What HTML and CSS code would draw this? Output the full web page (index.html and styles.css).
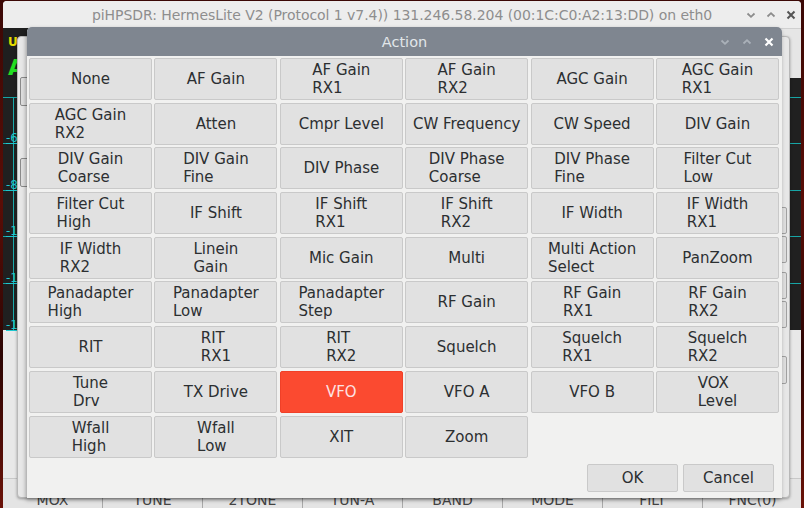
FILE: index.html
```html
<!DOCTYPE html>
<html>
<head>
<meta charset="utf-8">
<link rel="stylesheet" href="styles.css">
</head>
<body>
<div class="desktop">
  <div class="mainwin">
    <div class="main-title">
      <span class="main-title-text">piHPSDR: HermesLite V2 (Protocol 1 v7.4)) 131.246.58.204 (00:1C:C0:A2:13:DD) on eth0</span>
      <div class="wctl main-ctl">
        <svg width="10" height="8" viewBox="0 0 10 8"><path d="M1.5 2.5 L5 5.8 L8.5 2.5" fill="none" stroke="#8c8c8c" stroke-width="1.8"/></svg>
        <svg width="10" height="8" viewBox="0 0 10 8"><path d="M1.5 5.5 L5 2.2 L8.5 5.5" fill="none" stroke="#8c8c8c" stroke-width="1.8"/></svg>
        <svg width="10" height="10" viewBox="0 0 10 10"><path d="M1.5 1.5 L8.5 8.5 M8.5 1.5 L1.5 8.5" fill="none" stroke="#555" stroke-width="2"/></svg>
      </div>
    </div>
    <div class="main-body">
      <div class="top-area">
        <div class="vfo-panel">
          <div class="vfo-mode">USB</div>
          <div class="vfo-freq">A</div>
          <div class="vfo-lock">Lock</div>
        </div>
        <div class="meter-panel"></div>
      </div>
      <div class="panadapter">
        <div class="pan-vline"></div>
        <div class="pan-row first"><span></span></div>
        <div class="pan-row"><span>-60</span></div>
        <div class="pan-row"><span>-80</span></div>
        <div class="pan-row"><span>-100</span></div>
        <div class="pan-row"><span>-120</span></div>
        <div class="pan-row last"><span>-140</span></div>
      </div>
      <div class="waterfall"></div>
      <div class="toolbar">
        <div class="tb">MOX</div><div class="tb">TUNE</div><div class="tb">2TONE</div><div class="tb">TUN-A</div>
        <div class="tb">BAND</div><div class="tb">MODE</div><div class="tb">FILT</div><div class="tb">FNC(0)</div>
      </div>
    </div>
  </div>

  <div class="parentdlg">
    <div class="pd-left">
      <div class="pd-btn b1"></div>
      <div class="pd-btn b2"></div>
    </div>
    <div class="pd-right">
      <div class="pd-btn r1"></div>
      <div class="pd-btn r2"></div>
      <div class="pd-btn r3"></div>
      <div class="pd-btn r4"></div>
      <div class="pd-btn r5"></div>
    </div>
  </div>

  <div class="dialog">
    <div class="dlg-title">
      <span class="dlg-title-text">Action</span>
      <div class="wctl dlg-ctl">
        <svg width="10" height="8" viewBox="0 0 10 8"><path d="M1.5 2.5 L5 5.8 L8.5 2.5" fill="none" stroke="#aab1b9" stroke-width="1.8"/></svg>
        <svg width="10" height="8" viewBox="0 0 10 8"><path d="M1.5 5.5 L5 2.2 L8.5 5.5" fill="none" stroke="#aab1b9" stroke-width="1.8"/></svg>
        <svg width="10" height="10" viewBox="0 0 10 10"><path d="M1.5 1.5 L8.5 8.5 M8.5 1.5 L1.5 8.5" fill="none" stroke="#ffffff" stroke-width="2.2"/></svg>
      </div>
    </div>
    <div class="dlg-body">
      <div class="grid">
        <button class="act"><span>None</span></button>
        <button class="act"><span>AF Gain</span></button>
        <button class="act"><span>AF Gain<br>RX1</span></button>
        <button class="act"><span>AF Gain<br>RX2</span></button>
        <button class="act"><span>AGC Gain</span></button>
        <button class="act"><span>AGC Gain<br>RX1</span></button>

        <button class="act"><span>AGC Gain<br>RX2</span></button>
        <button class="act"><span>Atten</span></button>
        <button class="act"><span>Cmpr Level</span></button>
        <button class="act"><span>CW Frequency</span></button>
        <button class="act"><span>CW Speed</span></button>
        <button class="act"><span>DIV Gain</span></button>

        <button class="act"><span>DIV Gain<br>Coarse</span></button>
        <button class="act"><span>DIV Gain<br>Fine</span></button>
        <button class="act"><span>DIV Phase</span></button>
        <button class="act"><span>DIV Phase<br>Coarse</span></button>
        <button class="act"><span>DIV Phase<br>Fine</span></button>
        <button class="act"><span>Filter Cut<br>Low</span></button>

        <button class="act"><span>Filter Cut<br>High</span></button>
        <button class="act"><span>IF Shift</span></button>
        <button class="act"><span>IF Shift<br>RX1</span></button>
        <button class="act"><span>IF Shift<br>RX2</span></button>
        <button class="act"><span>IF Width</span></button>
        <button class="act"><span>IF Width<br>RX1</span></button>

        <button class="act"><span>IF Width<br>RX2</span></button>
        <button class="act"><span>Linein<br>Gain</span></button>
        <button class="act"><span>Mic Gain</span></button>
        <button class="act"><span>Multi</span></button>
        <button class="act"><span>Multi Action<br>Select</span></button>
        <button class="act"><span>PanZoom</span></button>

        <button class="act"><span>Panadapter<br>High</span></button>
        <button class="act"><span>Panadapter<br>Low</span></button>
        <button class="act"><span>Panadapter<br>Step</span></button>
        <button class="act"><span>RF Gain</span></button>
        <button class="act"><span>RF Gain<br>RX1</span></button>
        <button class="act"><span>RF Gain<br>RX2</span></button>

        <button class="act"><span>RIT</span></button>
        <button class="act"><span>RIT<br>RX1</span></button>
        <button class="act"><span>RIT<br>RX2</span></button>
        <button class="act"><span>Squelch</span></button>
        <button class="act"><span>Squelch<br>RX1</span></button>
        <button class="act"><span>Squelch<br>RX2</span></button>

        <button class="act"><span>Tune<br>Drv</span></button>
        <button class="act"><span>TX Drive</span></button>
        <button class="act selected"><span>VFO</span></button>
        <button class="act"><span>VFO A</span></button>
        <button class="act"><span>VFO B</span></button>
        <button class="act"><span>VOX<br>Level</span></button>

        <button class="act"><span>Wfall<br>High</span></button>
        <button class="act"><span>Wfall<br>Low</span></button>
        <button class="act"><span>XIT</span></button>
        <button class="act"><span>Zoom</span></button>
      </div>
      <div class="actions">
        <button class="dbtn">OK</button>
        <button class="dbtn">Cancel</button>
      </div>
    </div>
  </div>
</div>
</body>
</html>
```

FILE: styles.css
```css
* { box-sizing: border-box; }
html, body {
  margin: 0;
  padding: 0;
  width: 804px;
  height: 508px;
  overflow: hidden;
}
body {
  font-family: "DejaVu Sans", sans-serif;
  background: #2a0604;
}
.desktop {
  position: relative;
  width: 804px;
  height: 508px;
  overflow: hidden;
  background: linear-gradient(180deg, #3b0805 0%, #5a0d06 40%, #2c0503 70%, #6b1208 100%);
}

/* ---------- main window ---------- */
.mainwin {
  position: absolute;
  left: 3px;
  top: 1px;
  width: 798px;
  height: 540px;
  display: flex;
  flex-direction: column;
  background: #e9e9e9;
  border-radius: 4px 4px 0 0;
  overflow: hidden;
}
.main-title {
  height: 27px;
  flex: none;
  background: #ededed;
  display: flex;
  align-items: center;
  justify-content: center;
  position: relative;
}
.main-title-text {
  font-size: 14px;
  color: #8e8e8e;
  letter-spacing: -0.05px;
}
.wctl {
  position: absolute;
  display: flex;
  align-items: center;
}
.main-ctl {
  right: 5px;
  top: 9px;
  gap: 10px;
}
.main-body {
  flex: 1;
  display: flex;
  flex-direction: column;
}
.top-area {
  height: 50px;
  display: flex;
  flex: none;
}
.vfo-panel {
  flex: 1;
  background: #1f1f1f;
  padding: 8px 0 0 5px;
  position: relative;
}
.vfo-mode {
  color: #e8e000;
  font-size: 12px;
  font-weight: bold;
  line-height: 12px;
}
.vfo-freq {
  color: #22e022;
  font-size: 22px;
  font-weight: bold;
  line-height: 20px;
  margin-top: 10px;
}
.vfo-lock {
  color: #c8c8c8;
  font-size: 11px;
  font-weight: bold;
  line-height: 12px;
  margin-top: 2px;
}
.meter-panel {
  width: 260px;
  background: #e6e6e6;
  border-top: 1px solid #d0d0d0;
}
.panadapter {
  height: 252px;
  flex: none;
  background: #202020;
  position: relative;
  display: flex;
  flex-direction: column;
}
.pan-vline {
  position: absolute;
  left: 10px;
  top: 20px;
  bottom: 0;
  width: 1px;
  background: #1aa8a8;
}
.pan-row {
  height: 46.4px;
  flex: none;
  border-bottom: 1px solid #17a6a6;
  position: relative;
}
.pan-row.first { height: 20px; }
.pan-row.last { border-bottom: none; }
.pan-row span {
  position: absolute;
  left: 3px;
  bottom: -2px;
  color: #1ec8d0;
  font-size: 12px;
  text-decoration: underline;
}
.waterfall {
  height: 148px;
  flex: none;
  background: #e8e8e8;
}
.toolbar {
  display: flex;
  height: 60px;
  flex: none;
  background: #e4e4e4;
  border-top: 1px solid #c8c8c8;
}
.tb {
  width: 100px;
  flex: none;
  border-right: 1px solid #a8a8a8;
  text-align: center;
  font-size: 14px;
  color: #444;
  padding-top: 13px;
}

/* ---------- parent dialog (behind) ---------- */
.parentdlg {
  position: absolute;
  left: 17px;
  top: 36px;
  width: 773px;
  height: 462px;
  background: #e7e7e7;
  border: 1px solid #b8b8b8;
  border-radius: 4px;
  box-shadow: 0 1px 3px rgba(0,0,0,0.35);
}
.pd-left, .pd-right {
  position: absolute;
  top: 0;
  bottom: 0;
  width: 10px;
}
.pd-left { left: 2px; }
.pd-right { right: 2px; }
.pd-btn {
  position: absolute;
  left: 0;
  width: 12px;
  border: 1px solid #8a8a8a;
  border-radius: 2px;
  background: #dedede;
}
.pd-right .pd-btn { left: auto; right: 0; border-color: #a0a0a0; }
.b1 { top: 40px; height: 29px; }
.b2 { top: 121px; height: 29px; }
.r1 { top: 170px; height: 27px; }
.r2 { top: 199px; height: 27px; }
.r3 { top: 235px; height: 27px; }
.r4 { top: 264px; height: 27px; }
.r5 { top: 319px; height: 28px; }

/* ---------- action dialog ---------- */
.dialog {
  position: absolute;
  left: 27px;
  top: 27px;
  width: 755px;
  height: 471px;
  background: #f1f1f0;
  border-radius: 5px 5px 0 0;
  box-shadow: -1px 2px 4px rgba(0,0,0,0.35);
  display: flex;
  flex-direction: column;
}
.dlg-title {
  height: 29px;
  flex: none;
  background: #7f8690;
  border-radius: 5px 5px 0 0;
  display: flex;
  align-items: center;
  justify-content: center;
  position: relative;
}
.dlg-title-text {
  color: #e2e6ea;
  font-size: 14.5px;
  margin-top: 1px;
}
.dlg-ctl {
  right: 8px;
  top: 10px;
  gap: 12px;
}
.dlg-body {
  flex: 1;
  display: flex;
  flex-direction: column;
  padding: 2px 3px 6px 2px;
}
.grid {
  display: grid;
  grid-template-columns: repeat(6, 1fr);
  grid-auto-rows: 42px;
  column-gap: 2.4px;
  row-gap: 2.7px;
}
.act {
  margin: 0;
  padding: 0;
  font-family: "DejaVu Sans", sans-serif;
  font-size: 15px;
  line-height: 18px;
  color: #2c2f31;
  background: #e1e1e1;
  border: 1px solid #c9c9c9;
  border-radius: 2px;
  display: flex;
  align-items: center;
  justify-content: center;
}
.act span {
  display: inline-block;
  text-align: left;
}
.act.selected {
  background: #fb4a30;
  border-color: #f04028;
  color: #fde2e2;
}
.actions {
  margin-top: auto;
  display: flex;
  justify-content: flex-end;
  gap: 5px;
  padding-right: 5px;
}
.dbtn {
  width: 91px;
  height: 28px;
  margin: 0;
  padding: 0;
  font-family: "DejaVu Sans", sans-serif;
  font-size: 15px;
  color: #2c2f31;
  background: #e1e1e1;
  border: 1px solid #c9c9c9;
  border-radius: 2px;
}
```
